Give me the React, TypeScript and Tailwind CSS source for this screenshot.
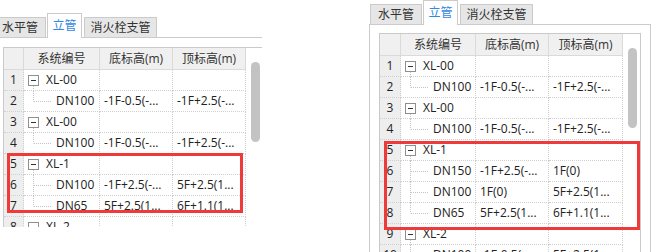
import * as React from "react"

type Row =
  | { n: number; kind: "parent"; name: string }
  | { n: number; kind: "child"; name: string; a: string; b: string; last?: boolean }

const leftRows: Row[] = [
  { n: 1, kind: "parent", name: "XL-00" },
  { n: 2, kind: "child", name: "DN100", a: "-1F-0.5(-...", b: "-1F+2.5(-...", last: true },
  { n: 3, kind: "parent", name: "XL-00" },
  { n: 4, kind: "child", name: "DN100", a: "-1F-0.5(-...", b: "-1F+2.5(-...", last: true },
  { n: 5, kind: "parent", name: "XL-1" },
  { n: 6, kind: "child", name: "DN100", a: "-1F+2.5(-...", b: "5F+2.5(1..." },
  { n: 7, kind: "child", name: "DN65", a: "5F+2.5(1...", b: "6F+1.1(1...", last: true },
  { n: 8, kind: "parent", name: "XL-2" },
]

const rightRows: Row[] = [
  { n: 1, kind: "parent", name: "XL-00" },
  { n: 2, kind: "child", name: "DN100", a: "-1F-0.5(-...", b: "-1F+2.5(-...", last: true },
  { n: 3, kind: "parent", name: "XL-00" },
  { n: 4, kind: "child", name: "DN100", a: "-1F-0.5(-...", b: "-1F+2.5(-...", last: true },
  { n: 5, kind: "parent", name: "XL-1" },
  { n: 6, kind: "child", name: "DN150", a: "-1F+2.5(-...", b: "1F(0)" },
  { n: 7, kind: "child", name: "DN100", a: "1F(0)", b: "5F+2.5(1..." },
  { n: 8, kind: "child", name: "DN65", a: "5F+2.5(1...", b: "6F+1.1(1...", last: true },
  { n: 9, kind: "parent", name: "XL-2" },
  { n: 10, kind: "child", name: "DN100", a: "-1F-0.5(-...", b: "5F+2.5(1...", last: true },
]

interface Cols {
  num: string
  c1: string
  c2: string
  c3: string
}

const cellBorder = "border-r border-b border-dotted border-[#cfcfcf]"

function Tab({ children, active, className }: { children: React.ReactNode; active?: boolean; className?: string }) {
  return (
    <div
      className={
        active
          ? `relative z-10 -mb-px flex h-[25px] items-center justify-center border border-b-0 border-[#cbcbcb] bg-white text-[#2f88e3] ${className ?? ""}`
          : `flex h-[20px] items-center justify-center border border-b-0 border-[#cbcbcb] bg-[#e6e6e6] text-[#333] ${className ?? ""}`
      }
    >
      {children}
    </div>
  )
}

function TreeCell({ row }: { row: Row }) {
  if (row.kind === "parent") {
    return (
      <>
        <svg className="absolute left-0 top-0 h-[21px] w-[30px] overflow-visible">
          <line x1="9.5" y1="16" x2="9.5" y2="21" stroke="#c4c4c4" strokeDasharray="1 1" />
        </svg>
        <span className="relative ml-[4px] flex h-[11px] w-[11px] items-center justify-center border border-[#8f8f8f] bg-white">
          <span className="h-px w-[5px] bg-[#333]" />
        </span>
        <span className="ml-[7px]">{row.name}</span>
      </>
    )
  }
  return (
    <>
      <svg className="absolute left-0 top-0 h-[21px] w-[30px] overflow-visible">
        <line x1="9.5" y1="0" x2="9.5" y2={row.last ? 10.5 : 21} stroke="#c4c4c4" strokeDasharray="1 1" />
        <line x1="10" y1="10.5" x2="27" y2="10.5" stroke="#c4c4c4" strokeDasharray="1 1" />
      </svg>
      <span className="ml-[32px]">{row.name}</span>
    </>
  )
}

function Panel({ rows, cols, padTop }: { rows: Row[]; cols: Cols; padTop: string }) {
  return (
    <div className="w-fit">
      <div className="flex h-[24px] items-end pl-px">
        <Tab className="w-[52px]">水平管</Tab>
        <Tab active className="ml-px w-[35px]">立管</Tab>
        <Tab className="ml-[2px] w-[73px]">消火栓支管</Tab>
      </div>
      <div className={`border border-[#cbcbcb] px-[9px] pb-[30px] ${padTop}`}>
        <div className="flex border border-[#cacaca] bg-white">
          <div className="flex flex-col">
            <div className="flex h-[22px] bg-[#f0f0f0] text-[#333]">
              <div className={`${cols.num} shrink-0 border-r border-b border-[#dadada]`} />
              <div className={`${cols.c1} flex shrink-0 items-center justify-center border-r border-b border-[#dadada]`}>系统编号</div>
              <div className={`${cols.c2} flex shrink-0 items-center justify-center border-r border-b border-[#dadada]`}>底标高(m)</div>
              <div className={`${cols.c3} flex shrink-0 items-center justify-center border-r border-b border-[#dadada]`}>顶标高(m)</div>
            </div>
            {rows.map((row) => (
              <div key={row.n} className="flex h-[21px]">
                <div className={`${cols.num} flex shrink-0 items-center justify-center bg-[#eeeeee] ${cellBorder}`}>{row.n}</div>
                <div className={`${cols.c1} relative flex shrink-0 items-center whitespace-nowrap ${cellBorder}`}>
                  <TreeCell row={row} />
                </div>
                <div className={`${cols.c2} flex shrink-0 items-center overflow-hidden whitespace-nowrap pl-[4px] ${cellBorder}`}>
                  {row.kind === "child" ? row.a : ""}
                </div>
                <div className={`${cols.c3} flex shrink-0 items-center overflow-hidden whitespace-nowrap pl-[4px] ${cellBorder}`}>
                  {row.kind === "child" ? row.b : ""}
                </div>
              </div>
            ))}
          </div>
          <div className="w-[17px] shrink-0">
            <div className="ml-[5px] mt-[14px] h-[80px] w-[9px] rounded-full bg-[#c3c3c3]" />
          </div>
        </div>
      </div>
    </div>
  )
}

export default function App() {
  return (
    <div className="relative flex h-[252px] w-[651px] overflow-hidden bg-white font-['Open_Sans','Noto_Sans_CJK_SC',sans-serif] text-[12px] text-[#222]">
      <div className="h-[227px] w-[262px] shrink-0 overflow-hidden">
        <div className="ml-[-7px] mt-[13px]">
          <Panel
            rows={leftRows}
            padTop="pt-[9px]"
            cols={{ num: "w-[20px]", c1: "w-[76px]", c2: "w-[73px]", c3: "w-[73px]" }}
          />
        </div>
      </div>
      <div className="ml-[107px] h-[252px] shrink-0 overflow-hidden">
        <Panel
          rows={rightRows}
          padTop="pt-[8px]"
          cols={{ num: "w-[21px]", c1: "w-[75px]", c2: "w-[73px]", c3: "w-[74px]" }}
        />
      </div>

      {/* highlight frames drawn over the tables */}
      <div className="pointer-events-none absolute left-[7px] top-[153px] h-[60px] w-[236px] border-[3px] border-[#f03a3a]" />
      <div className="pointer-events-none absolute left-[384px] top-[141px] h-[89px] w-[256px] border-[3px] border-[#f03a3a]" />
    </div>
  )
}
